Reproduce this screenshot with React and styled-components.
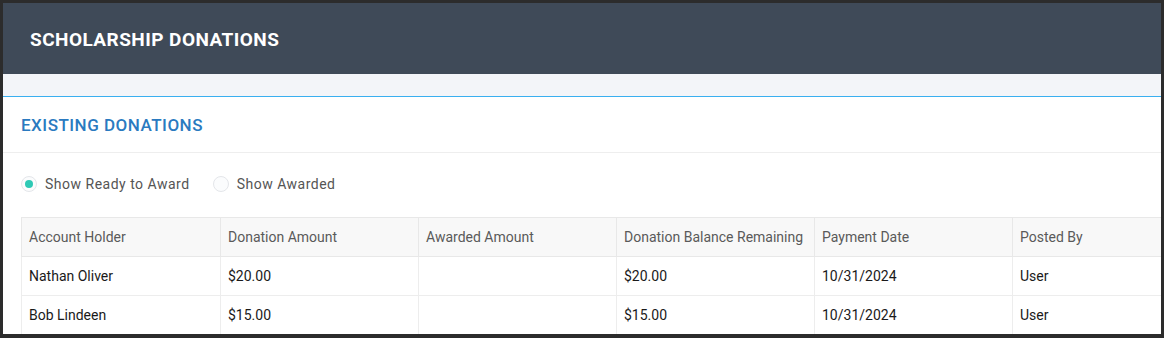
import React, { useState } from 'react'
import styled, { createGlobalStyle } from 'styled-components'

const GlobalStyle = createGlobalStyle`
  html, body {
    margin: 0;
    padding: 0;
    background: #2c2c2c;
    font-family: Roboto, "Liberation Sans", Arial, sans-serif;
  }
`

const columns = [
  { label: 'Account Holder', width: 199 },
  { label: 'Donation Amount', width: 198 },
  { label: 'Awarded Amount', width: 198 },
  { label: 'Donation Balance Remaining', width: 198 },
  { label: 'Payment Date', width: 198 },
  { label: 'Posted By', width: 198 }
]

const donations = [
  { holder: 'Nathan Oliver', amount: '$20.00', awarded: '', balance: '$20.00', date: '10/31/2024', postedBy: 'User' },
  { holder: 'Bob Lindeen', amount: '$15.00', awarded: '', balance: '$15.00', date: '10/31/2024', postedBy: 'User' }
]

const App = () => {
  const [filter, setFilter] = useState('ready')

  return (
    <>
      <GlobalStyle />
      <Frame>
        <Panel>
          <PageHeader>
            <h1>SCHOLARSHIP DONATIONS</h1>
          </PageHeader>
          <SubBand />
          <SectionTitle>
            <h2>EXISTING DONATIONS</h2>
          </SectionTitle>
          <RadioRow>
            <RadioOption onClick={() => setFilter('ready')}>
              <RadioCircle checked={filter === 'ready'} />
              Show Ready to Award
            </RadioOption>
            <RadioOption onClick={() => setFilter('awarded')}>
              <RadioCircle checked={filter === 'awarded'} />
              Show Awarded
            </RadioOption>
          </RadioRow>
          <TableWrap>
            <Table>
              <colgroup>
                {columns.map((c) => <col key={c.label} width={c.width} />)}
              </colgroup>
              <thead>
                <tr>
                  {columns.map((c) => <Th key={c.label}>{c.label}</Th>)}
                </tr>
              </thead>
              <tbody>
                {donations.map((d) => (
                  <tr key={d.holder}>
                    <Td>{d.holder}</Td>
                    <Td>{d.amount}</Td>
                    <Td>{d.awarded}</Td>
                    <Td>{d.balance}</Td>
                    <Td>{d.date}</Td>
                    <Td>{d.postedBy}</Td>
                  </tr>
                ))}
              </tbody>
            </Table>
          </TableWrap>
        </Panel>
      </Frame>
    </>
  )
}

export default App

const Frame = styled.div`
  width: 1164px;
  height: 338px;
  padding: 3px 3px 4px 3px;
  box-sizing: border-box;
  background: #2c2c2c;
`

const Panel = styled.div`
  width: 100%;
  height: 100%;
  background: #ffffff;
  overflow: hidden;
  display: flex;
  flex-direction: column;
`

const PageHeader = styled.div`
  flex: none;
  height: 71px;
  background: #3f4a58;
  display: flex;
  align-items: center;
  padding-left: 27px;

  h1 {
    margin: 0;
    padding-top: 2px;
    color: #ffffff;
    font-size: 19px;
    font-weight: 700;
    letter-spacing: 0.45px;
  }
`

const SubBand = styled.div`
  flex: none;
  height: 22px;
  background: #f3f5f9;
  border-bottom: 1px solid #3aaff0;
`

const SectionTitle = styled.div`
  flex: none;
  height: 55px;
  display: flex;
  align-items: center;
  padding-left: 18px;
  border-bottom: 1px solid #eeeeee;

  h2 {
    margin: 0;
    color: #2a7ac0;
    font-size: 17px;
    font-weight: 500;
    letter-spacing: 0.5px;
  }
`

const RadioRow = styled.div`
  flex: none;
  display: flex;
  align-items: center;
  gap: 23px;
  padding: 23px 18px 25px;
`

const RadioOption = styled.label`
  display: flex;
  align-items: center;
  gap: 8px;
  color: #555555;
  font-size: 14px;
  letter-spacing: 0.5px;
  cursor: pointer;
`

const RadioCircle = styled.span`
  width: 16px;
  height: 16px;
  box-sizing: border-box;
  border-radius: 50%;
  border: 1px solid #e4e6ea;
  background: #fbfcfd;
  display: flex;
  align-items: center;
  justify-content: center;

  &::after {
    content: '';
    width: 8px;
    height: 8px;
    border-radius: 50%;
    background: ${(p) => (p.checked ? '#2ec9b5' : 'transparent')};
  }
`

const TableWrap = styled.div`
  padding-left: 18px;
`

const Table = styled.table`
  table-layout: fixed;
  width: 1189px;
  border-collapse: collapse;
  font-size: 14px;
`

const Th = styled.th`
  height: 38px;
  padding: 0 7px;
  text-align: left;
  font-weight: 400;
  color: #5a5a5a;
  background: #f8f8f8;
  border: 1px solid #e8e8e8;
  white-space: nowrap;
`

const Td = styled.td`
  height: 38px;
  padding: 0 7px;
  color: #1a1a1a;
  border: 1px solid #ededed;
  white-space: nowrap;
`
